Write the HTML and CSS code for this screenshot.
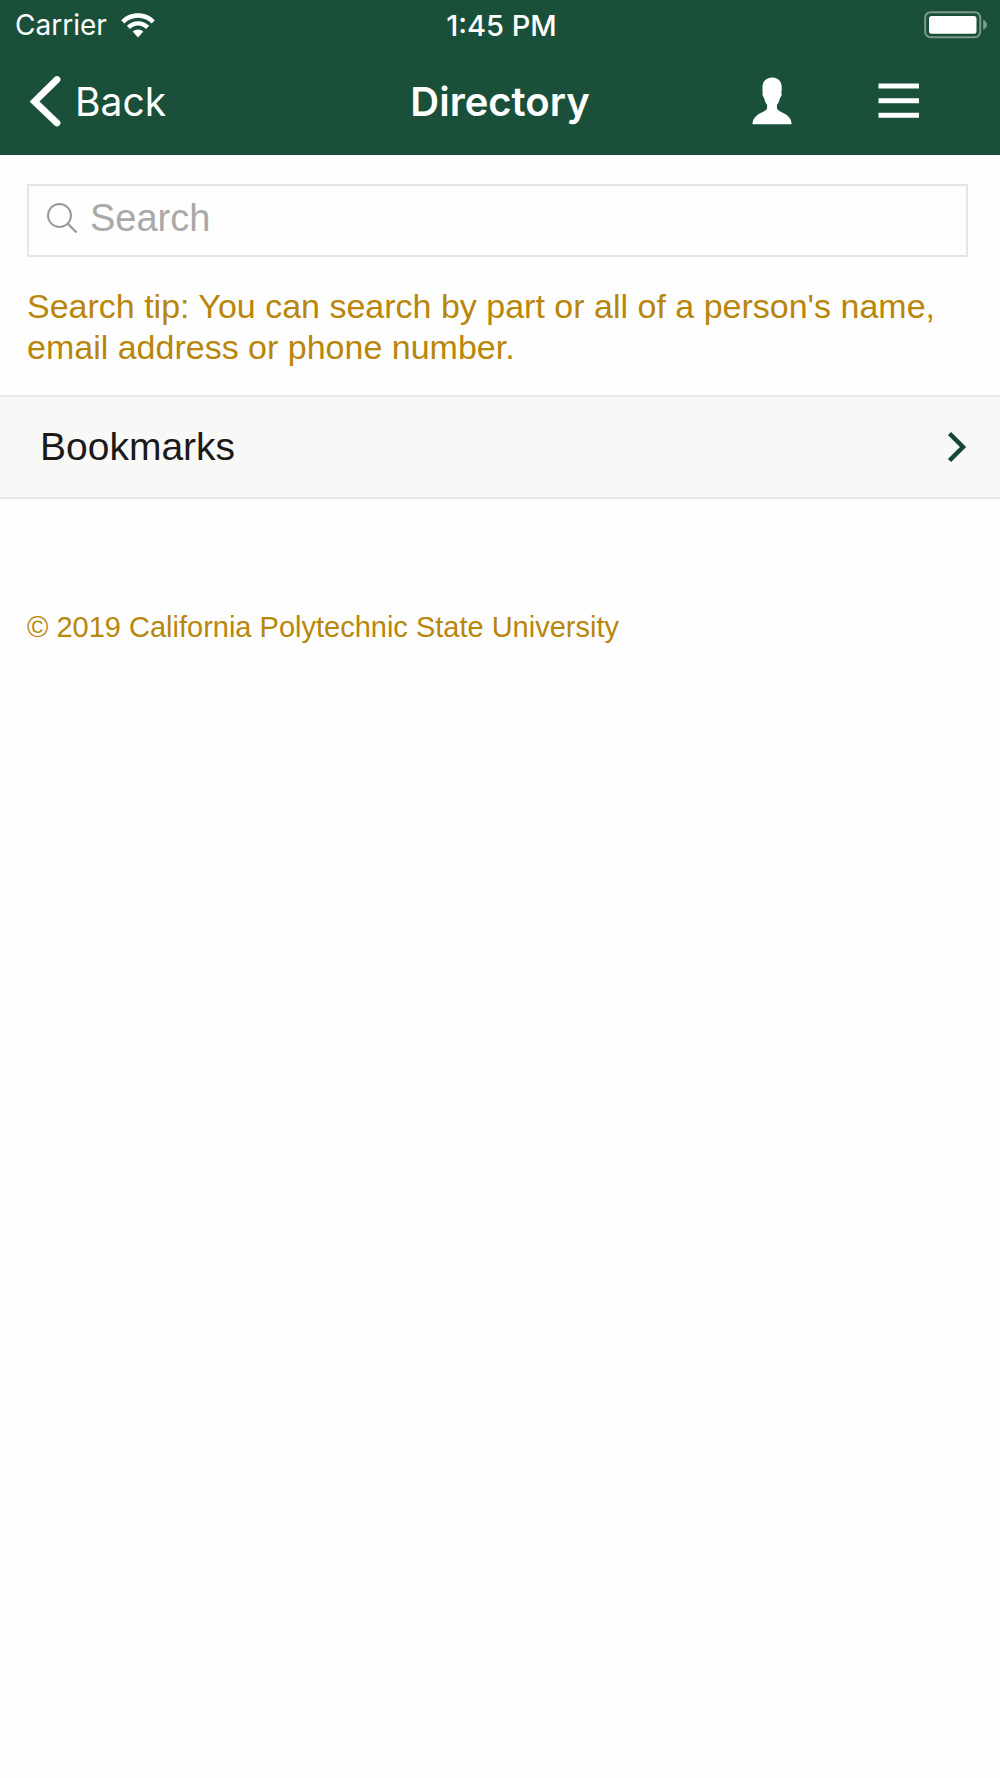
FILE: index.html
```html
<!DOCTYPE html>
<html lang="en">
<head>
  <meta charset="UTF-8">
  <meta name="viewport" content="width=device-width, initial-scale=1.0">
  <title>Directory</title>
  <link rel="stylesheet" href="styles.css">
</head>
<body>
  <header class="header">
    <div class="status-bar">
      <div class="carrier">
        <span>Carrier</span>
        <svg width="34" height="25" viewBox="0 0 34 25" aria-hidden="true">
          <path d="M17 0.200C23.600 0.200 29.600 2.800 33.800 7.200L30.600 10.400C27.100 6.800 22.300 4.700 17 4.700S6.900 6.800 3.400 10.400L0.200 7.200C4.400 2.800 10.400 0.200 17 0.200Z" fill="#fff"/>
          <path d="M17 8.200C21.400 8.200 25.300 9.900 28.200 12.800L25 16C22.900 13.900 20.100 12.600 17 12.600S11.100 13.900 9 16L5.800 12.800C8.700 9.900 12.600 8.200 17 8.200Z" fill="#fff"/>
          <path d="M17 16.500C19 16.500 20.900 17.300 22.300 18.600L17 24.500L11.700 18.600C13.100 17.300 15 16.500 17 16.500Z" fill="#fff"/>
        </svg>
      </div>
      <span class="time">1:45 PM</span>
      <svg class="battery" width="64" height="28" viewBox="0 0 64 28" aria-hidden="true">
        <rect x="1.200" y="1.200" width="55" height="25" rx="5.500" fill="none" stroke="#7c9b8f" stroke-width="2"/>
        <rect x="5" y="5" width="47.500" height="17.800" rx="2.500" fill="#fff"/>
        <path d="M59.200 8.700C61.500 9.500 63 11.500 63 13.700S61.500 18 59.200 18.800Z" fill="#7c9b8f"/>
      </svg>
    </div>
    <nav class="nav-bar">
      <button class="back-btn" type="button">
        <svg width="31" height="52" viewBox="0 0 31 52" aria-hidden="true">
          <path d="M27 4.500L4.500 26.500L27 48" fill="none" stroke="#fff" stroke-width="6.800" stroke-linecap="round" stroke-linejoin="miter"/>
        </svg>
        Back
      </button>
      <h1>Directory</h1>
      <div class="nav-actions">
        <button class="icon-btn" type="button" aria-label="Profile">
          <svg width="40" height="48" viewBox="0 0 40 48" aria-hidden="true">
            <path d="M20 0.500C25.500 0.200 29.500 4 29.700 9.500C29.800 11.800 29.600 13.800 29.300 15.800C30.100 16.800 29.500 19.300 28.200 20.400C27.500 23.600 26.300 25.800 25 28V31.500C26.500 34.500 31.500 35.500 35 38.300C38 40.700 39.600 43.500 39.600 47.300H0.500C0.500 43.500 2.100 40.700 5.100 38.300C8.600 35.500 13.600 34.500 15.100 31.500V28C13.800 25.800 12.600 23.600 11.900 20.400C10.600 19.300 10 16.800 10.800 15.800C10.500 13.800 10.300 11.800 10.500 9.500C10.800 4 14.500 0.500 20 0.500Z" fill="#fff"/>
          </svg>
        </button>
        <button class="icon-btn" type="button" aria-label="Menu">
          <svg width="42" height="36" viewBox="0 0 42 36" aria-hidden="true">
            <path d="M0.500 0.500H41V5.500H0.500ZM0.500 15.200H41V20.200H0.500ZM0.500 29.800H41V34.800H0.500Z" fill="#fff"/>
          </svg>
        </button>
      </div>
    </nav>
  </header>

  <main>
    <form class="search" role="search">
      <label class="search-box">
        <svg width="31" height="31" viewBox="0 0 31 31" aria-hidden="true">
          <circle cx="12.500" cy="12.500" r="11.500" fill="none" stroke="#999" stroke-width="2"/>
          <path d="M20.500 20.500L29.500 29.500" stroke="#999" stroke-width="2.400"/>
        </svg>
        <input type="search" placeholder="Search" aria-label="Search">
      </label>
      <p class="tip">Search tip: You can search by part or all of a person's name, email address or phone number.</p>
    </form>

    <a class="list-item" href="#bookmarks">
      Bookmarks
      <svg width="20" height="32" viewBox="0 0 20 32" aria-hidden="true">
        <path d="M2.500 2.500L16 16L2.500 29.500" fill="none" stroke="#154734" stroke-width="4.500"/>
      </svg>
    </a>
  </main>

  <footer class="footer">© 2019 California Polytechnic State University</footer>
</body>
</html>
```
FILE: styles.css
```css
* {
  margin: 0;
  padding: 0;
  box-sizing: border-box;
}
body {
  font-family: "Liberation Sans", Arial, sans-serif;
  background: #fefefe;
  color: #1a1a1a;
}
svg {
  display: block;
  flex-shrink: 0;
}
button {
  background: none;
  border: none;
  color: inherit;
  font: inherit;
  cursor: pointer;
}
.header {
  background: #1a4f3a;
  color: #fff;
  font-family: Inter, sans-serif;
}
.status-bar, .nav-bar {
  display: grid;
  grid-template-columns: 1fr auto 1fr;
  align-items: center;
}
.status-bar {
  height: 50px;
  padding: 0 12px 0 15px;
  font-size: 28px;
}
.carrier {
  display: flex;
  align-items: center;
  gap: 14px;
}
.time {
  font-size: 29px;
  font-weight: 500;
}
.battery {
  justify-self: end;
}
.nav-bar {
  height: 105px;
  padding: 0 30px 3px;
  font-size: 39px;
}
.back-btn {
  display: flex;
  align-items: center;
  justify-self: start;
  gap: 14px;
}
h1 {
  font-size: 40px;
  font-weight: 600;
}
.nav-actions {
  display: flex;
  align-items: center;
  justify-content: flex-end;
  gap: 86px;
  padding-right: 50px;
}
.search {
  padding: 29px 32px 26px 27px;
}
.search-box {
  display: flex;
  align-items: center;
  gap: 12px;
  height: 73px;
  padding: 0 18px 4px;
  border: 2px solid #e6e6e6;
}
.search-box input {
  flex: 1;
  min-width: 0;
  border: none;
  outline: none;
  background: none;
  font-family: inherit;
  font-size: 38px;
  color: #1a1a1a;
  appearance: none;
}
.search-box input::placeholder {
  color: #a9a9a9;
}
.tip {
  margin-top: 29px;
  font-size: 34px;
  line-height: 41px;
  color: #b8860b;
}
.list-item {
  display: flex;
  align-items: center;
  justify-content: space-between;
  margin-top: 1px;
  padding: 28px 33px 28px 40px;
  border-top: 2px solid #e2ebe7;
  border-bottom: 2px solid #e2ebe7;
  background: #f8f8f6;
  color: #1a1a1a;
  font-size: 39px;
  line-height: 44px;
  text-decoration: none;
}
.footer {
  padding: 110px 27px 28px;
  font-size: 29px;
  line-height: 36px;
  color: #b8860b;
}
```
